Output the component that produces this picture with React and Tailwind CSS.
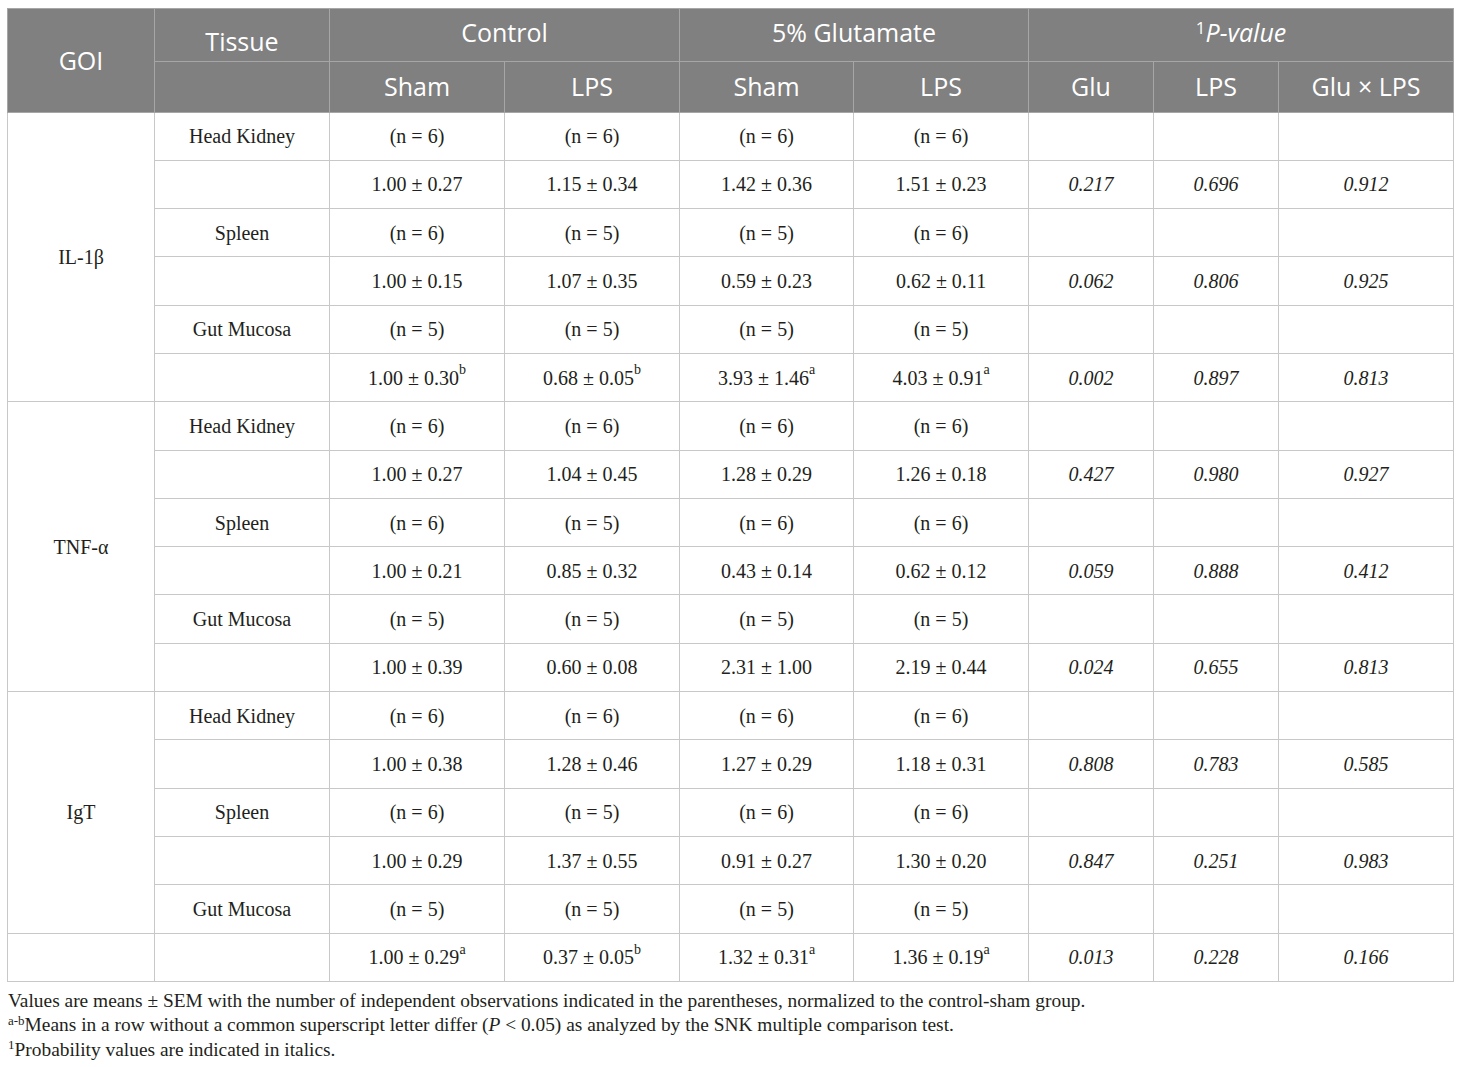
import React from "react";

const groups = [
  {
    goi: "IL-1β",
    rows: [
      ["Head Kidney", ["(n = 6)", "(n = 6)", "(n = 6)", "(n = 6)"], null],
      ["", [["1.00 ± 0.27"], ["1.15 ± 0.34"], ["1.42 ± 0.36"], ["1.51 ± 0.23"]], ["0.217", "0.696", "0.912"]],
      ["Spleen", ["(n = 6)", "(n = 5)", "(n = 5)", "(n = 6)"], null],
      ["", [["1.00 ± 0.15"], ["1.07 ± 0.35"], ["0.59 ± 0.23"], ["0.62 ± 0.11"]], ["0.062", "0.806", "0.925"]],
      ["Gut Mucosa", ["(n = 5)", "(n = 5)", "(n = 5)", "(n = 5)"], null],
      ["", [["1.00 ± 0.30", "b"], ["0.68 ± 0.05", "b"], ["3.93 ± 1.46", "a"], ["4.03 ± 0.91", "a"]], ["0.002", "0.897", "0.813"]],
    ],
  },
  {
    goi: "TNF-α",
    rows: [
      ["Head Kidney", ["(n = 6)", "(n = 6)", "(n = 6)", "(n = 6)"], null],
      ["", [["1.00 ± 0.27"], ["1.04 ± 0.45"], ["1.28 ± 0.29"], ["1.26 ± 0.18"]], ["0.427", "0.980", "0.927"]],
      ["Spleen", ["(n = 6)", "(n = 5)", "(n = 6)", "(n = 6)"], null],
      ["", [["1.00 ± 0.21"], ["0.85 ± 0.32"], ["0.43 ± 0.14"], ["0.62 ± 0.12"]], ["0.059", "0.888", "0.412"]],
      ["Gut Mucosa", ["(n = 5)", "(n = 5)", "(n = 5)", "(n = 5)"], null],
      ["", [["1.00 ± 0.39"], ["0.60 ± 0.08"], ["2.31 ± 1.00"], ["2.19 ± 0.44"]], ["0.024", "0.655", "0.813"]],
    ],
  },
  {
    goi: "IgT",
    span: 5,
    rows: [
      ["Head Kidney", ["(n = 6)", "(n = 6)", "(n = 6)", "(n = 6)"], null],
      ["", [["1.00 ± 0.38"], ["1.28 ± 0.46"], ["1.27 ± 0.29"], ["1.18 ± 0.31"]], ["0.808", "0.783", "0.585"]],
      ["Spleen", ["(n = 6)", "(n = 5)", "(n = 6)", "(n = 6)"], null],
      ["", [["1.00 ± 0.29"], ["1.37 ± 0.55"], ["0.91 ± 0.27"], ["1.30 ± 0.20"]], ["0.847", "0.251", "0.983"]],
      ["Gut Mucosa", ["(n = 5)", "(n = 5)", "(n = 5)", "(n = 5)"], null],
      ["", [["1.00 ± 0.29", "a"], ["0.37 ± 0.05", "b"], ["1.32 ± 0.31", "a"], ["1.36 ± 0.19", "a"]], ["0.013", "0.228", "0.166"]],
    ],
  },
];

const th = "border border-[#a6a6a6] font-normal text-white text-center align-middle";
const td = "border border-[#c8c8c8] text-center align-middle p-0";

function Val({ v }) {
  if (typeof v === "string") return v;
  return (
    <>
      {v[0]}
      {v[1] ? <sup className="text-[14px] relative top-[-3px] align-super leading-none">{v[1]}</sup> : null}
    </>
  );
}

export default function App() {
  return (
    <div className="bg-white w-[1460px] h-[1067px] pt-[8px] pl-[7px] text-[#231f20]" style={{ fontFamily: '"Liberation Serif", serif' }}>
      <table className="table-fixed border-collapse w-[1446px] border border-[#c8c8c8]">
        <colgroup>
          <col className="w-[147px]" />
          <col className="w-[175px]" />
          <col className="w-[175px]" />
          <col className="w-[175px]" />
          <col className="w-[174px]" />
          <col className="w-[175px]" />
          <col className="w-[125px]" />
          <col className="w-[125px]" />
          <col className="w-[175px]" />
        </colgroup>
        <thead className="bg-[#7f807f] text-[25px]" style={{ fontFamily: '"Open Sans", sans-serif' }}>
          <tr className="h-[52px]">
            <th rowSpan={2} className={th}>GOI</th>
            <th className={th + " pt-[14px]"}>Tissue</th>
            <th colSpan={2} className={th + " pb-[4px]"}>Control</th>
            <th colSpan={2} className={th + " pb-[4px]"}>5% Glutamate</th>
            <th colSpan={3} className={th + " pb-[4px]"}>
              <sup className="text-[17px] not-italic">1</sup>
              <span className="italic">P-value</span>
            </th>
          </tr>
          <tr className="h-[51px]">
            <th className={th}></th>
            <th className={th}>Sham</th>
            <th className={th}>LPS</th>
            <th className={th}>Sham</th>
            <th className={th}>LPS</th>
            <th className={th}>Glu</th>
            <th className={th}>LPS</th>
            <th className={th}>Glu × LPS</th>
          </tr>
        </thead>
        <tbody className="text-[20px]">
          {groups.map((g, gi) =>
            g.rows.map((r, ri) => (
              <tr key={gi + "-" + ri} className="h-[48.3px]">
                {ri === 0 ? (
                  <td rowSpan={g.span || 6} className={td}>{g.goi}</td>
                ) : null}
                {g.span && ri === 5 ? <td className={td}></td> : null}
                <td className={td}>{r[0]}</td>
                {r[1].map((v, vi) => (
                  <td key={vi} className={td}>
                    <Val v={v} />
                  </td>
                ))}
                {(r[2] || ["", "", ""]).map((p, pi) => (
                  <td key={"p" + pi} className={td + " italic"}>{p}</td>
                ))}
              </tr>
            ))
          )}
        </tbody>
      </table>
      <div className="text-[19.4px] leading-[24.5px] pt-[7px] pl-[1px]">
        <p>Values are means ± SEM with the number of independent observations indicated in the parentheses, normalized to the control-sham group.</p>
        <p>
          <sup className="text-[13px]">a-b</sup>Means in a row without a common superscript letter differ (<span className="italic">P</span> &lt; 0.05) as analyzed by the SNK multiple comparison test.
        </p>
        <p>
          <sup className="text-[13px]">1</sup>Probability values are indicated in italics.
        </p>
      </div>
    </div>
  );
}
